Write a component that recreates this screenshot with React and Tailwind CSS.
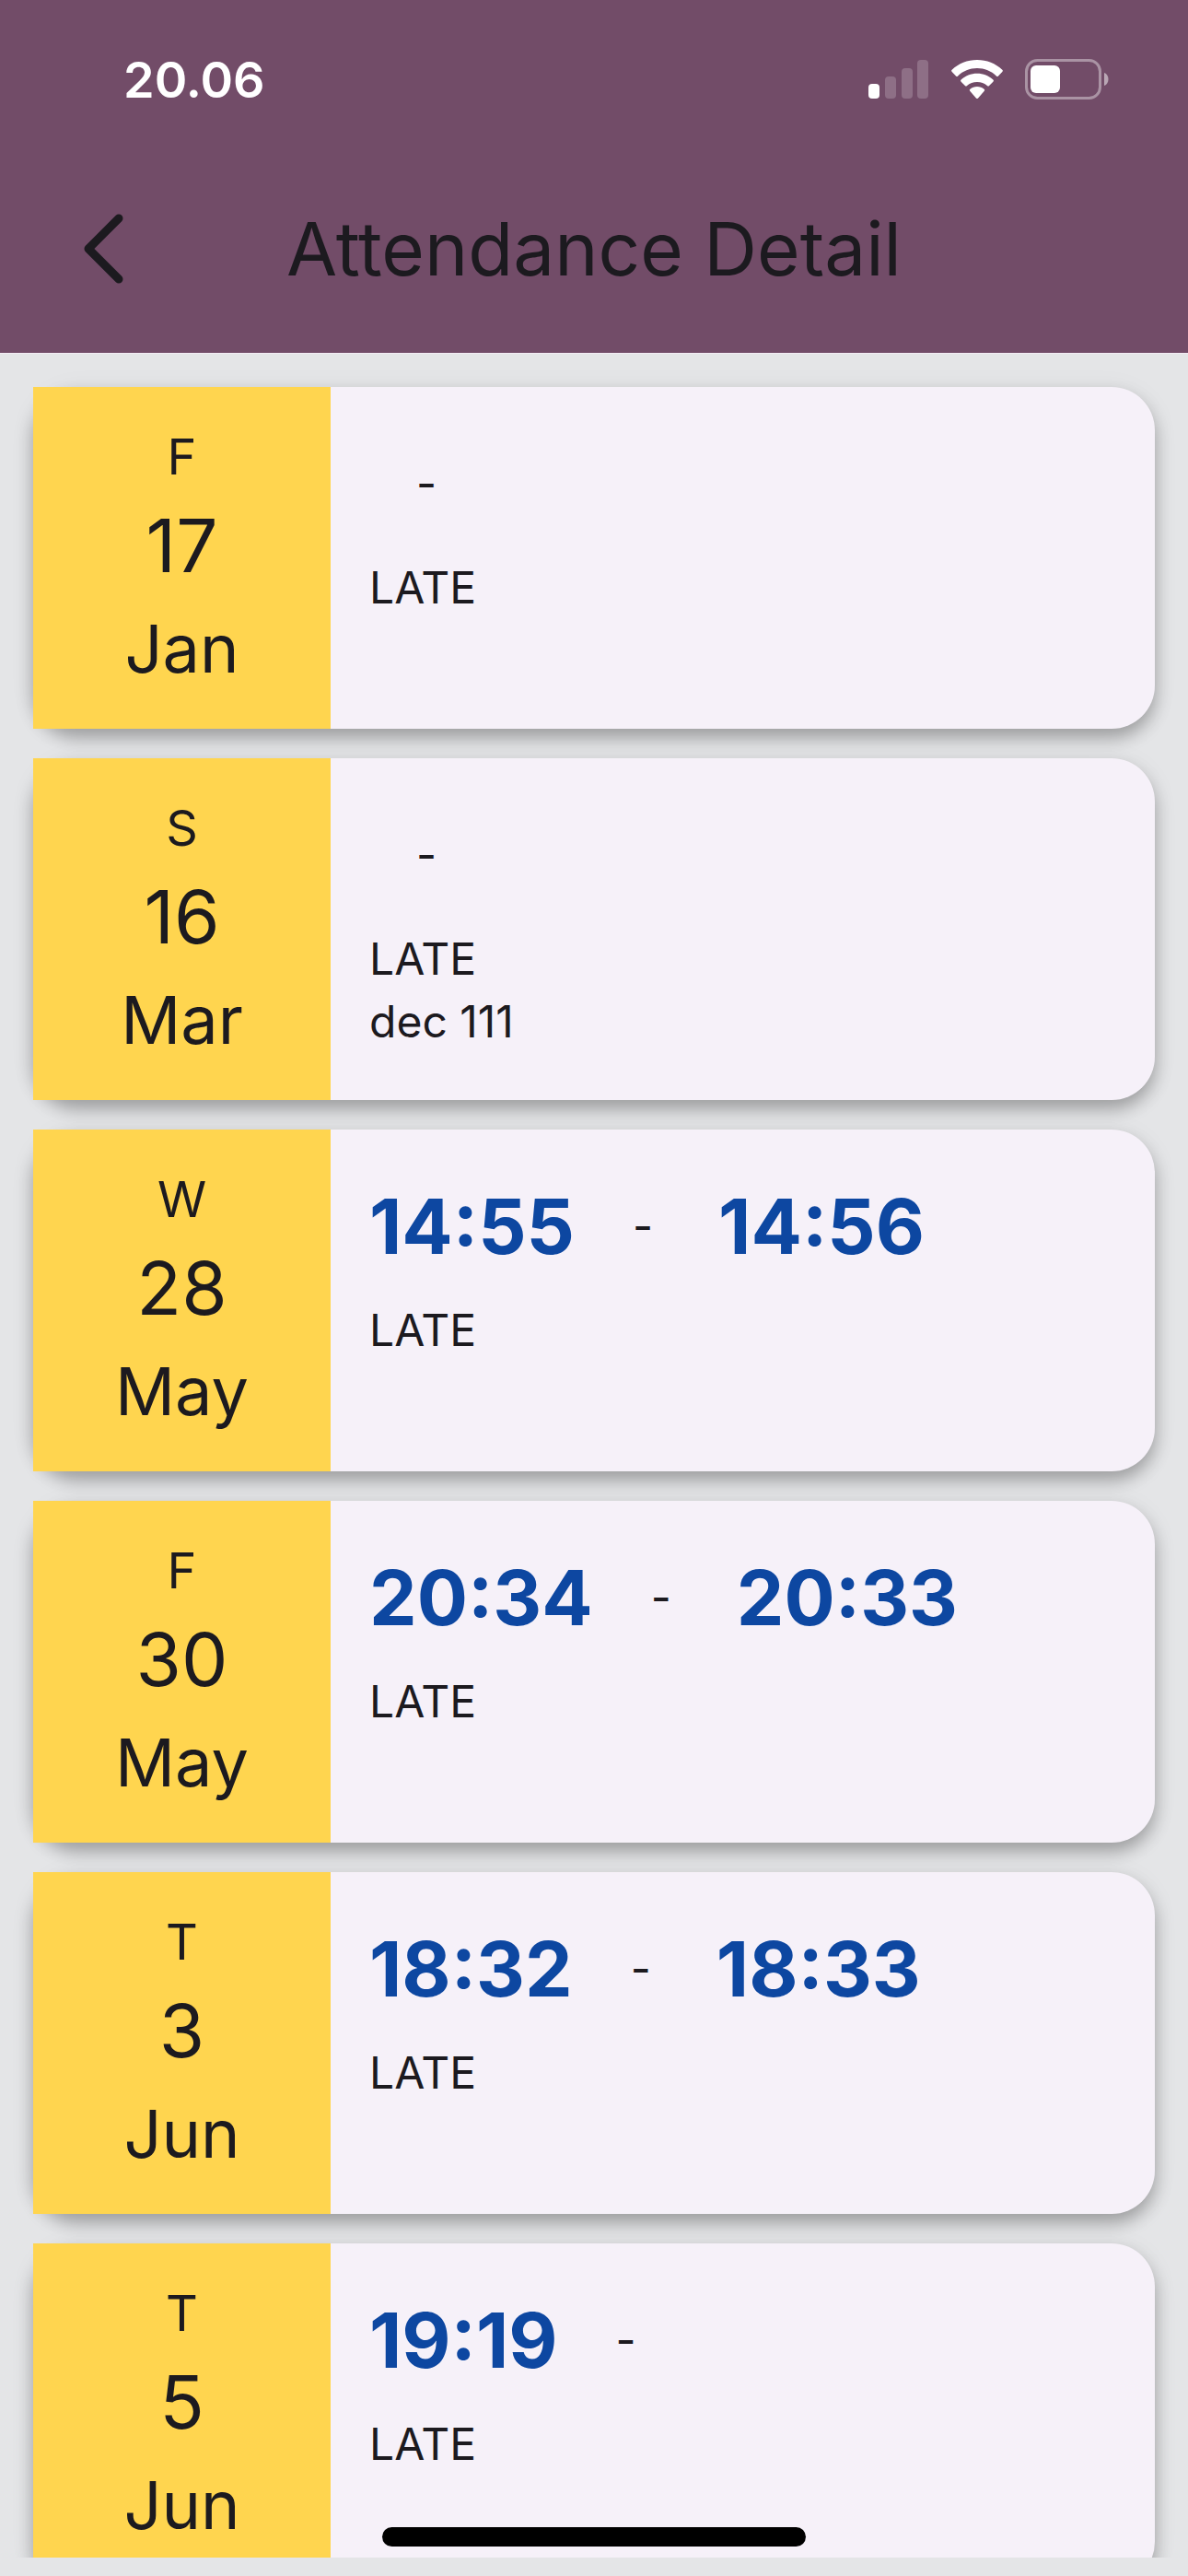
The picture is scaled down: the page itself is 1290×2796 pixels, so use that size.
const records = [
  { id: 1, day: 'F', date: '17', month: 'Jan', status: 'LATE' },
  { id: 2, day: 'S', date: '16', month: 'Mar', status: 'LATE', note: 'dec 111' },
  { id: 3, day: 'W', date: '28', month: 'May', checkIn: '14:55', checkOut: '14:56', status: 'LATE' },
  { id: 4, day: 'F', date: '30', month: 'May', checkIn: '20:34', checkOut: '20:33', status: 'LATE' },
  { id: 5, day: 'T', date: '3', month: 'Jun', checkIn: '18:32', checkOut: '18:33', status: 'LATE' },
  { id: 6, day: 'T', date: '5', month: 'Jun', checkIn: '19:19', status: 'LATE' },
];

function SignalIcon() {
  return (
    <svg className="w-[66px] h-[42px]" viewBox="0 0 66 42" fill="white">
      <rect x="0" y="26" width="12" height="16" rx="4" />
      <rect x="18" y="18" width="12" height="24" rx="4" opacity="0.2" />
      <rect x="36" y="9" width="12" height="33" rx="4" opacity="0.2" />
      <rect x="53" y="0" width="12" height="42" rx="4" opacity="0.2" />
    </svg>
  );
}

function WifiIcon() {
  return (
    <svg className="w-14 h-[42px]" viewBox="0 0 56 42" fill="white">
      <path d="M28 0C17.500 0 7.900 4 0.700 10.700a1.500 1.500 0 0 0 0 2.200L5 17.400a1.500 1.500 0 0 0 2.100 0C12.600 12.200 20 9.100 28 9.100s15.400 3.100 20.900 8.300a1.500 1.500 0 0 0 2.100 0l4.300-4.500a1.500 1.500 0 0 0 0-2.200C48.100 4 38.500 0 28 0z" />
      <path d="M28 14.800c-6.700 0-12.800 2.500-17.400 6.700a1.500 1.500 0 0 0 0 2.200l4.300 4.300a1.500 1.500 0 0 0 2.100 0C19.900 25.400 23.800 23.900 28 23.900s8.100 1.500 11 4.100a1.500 1.500 0 0 0 2.100 0l4.300-4.300a1.500 1.500 0 0 0 0-2.200C40.800 17.300 34.700 14.800 28 14.800z" />
      <path d="M28 29c-2.900 0-5.500 1-7.600 2.700a1.500 1.500 0 0 0 0 2.200l6.500 7.600a1.500 1.500 0 0 0 2.200 0l6.500-7.600a1.500 1.500 0 0 0 0-2.200C33.500 30 30.900 29 28 29z" />
    </svg>
  );
}

function BatteryIcon() {
  return (
    <svg className="w-[91px] h-11" viewBox="0 0 91 44" fill="none">
      <rect x="1.500" y="1.500" width="80" height="41" rx="12" stroke="white" strokeOpacity="0.4" strokeWidth="3" />
      <rect x="6" y="7" width="32" height="30" rx="6" fill="white" />
      <path d="M86 15c3 1 4.500 4 4.500 7s-1.500 6-4.500 7z" fill="white" fillOpacity="0.5" />
    </svg>
  );
}

function AttendanceCard({ record }) {
  return (
    <li className="flex h-[371px] shrink-0 rounded-[47px] bg-[#f6f1f9] shadow-[0_10px_18px_rgba(0,0,0,0.28),0_4px_30px_rgba(0,0,0,0.06)]">
      <div className="flex w-[323px] shrink-0 flex-col items-center bg-[#ffd54f] pt-10">
        <span className="text-[54px] leading-[72px]">{record.day}</span>
        <span className="text-[80px] leading-[120px]">{record.date}</span>
        <span className="text-[72px] leading-[104px]">{record.month}</span>
      </div>
      <div className="flex min-w-0 flex-1 flex-col pl-[42px] pt-[50px]">
        <div className="flex h-[110px] items-center">
          {record.checkIn && (
            <span className="pr-3 text-[82px] font-bold text-[#0d47a1]">{record.checkIn}</span>
          )}
          <span className="px-[51px] text-[48px]">-</span>
          {record.checkOut && (
            <span className="pl-5 text-[82px] font-bold text-[#0d47a1]">{record.checkOut}</span>
          )}
        </div>
        <span className="mt-6 text-[48px] leading-[68px]">{record.status}</span>
        {record.note && <span className="text-[48px] leading-[68px]">{record.note}</span>}
      </div>
    </li>
  );
}

export default function App() {
  return (
    <div className="relative flex h-screen flex-col overflow-hidden bg-[#e4e5e7] pb-5 font-['Inter',sans-serif] text-[#1c1a1f]">
      <header className="h-[384px] shrink-0 border-b border-[#f3edf4] bg-[#724c68]">
        <div className="flex h-[172px] items-center justify-between pl-[134px] pr-[86px] text-white">
          <span className="text-[54px] font-semibold">20.06</span>
          <div className="flex items-center gap-6">
            <SignalIcon />
            <WifiIcon />
            <BatteryIcon />
          </div>
        </div>
        <div className="grid h-[196px] grid-cols-[220px_1fr_220px] items-center">
          <button type="button" aria-label="Back" className="flex h-32 items-center pl-[88px]">
            <svg className="h-20 w-12" viewBox="0 0 48 80" fill="none" stroke="currentColor" strokeWidth="9" strokeLinecap="round" strokeLinejoin="round">
              <path d="M41 7 8 40l33 33" />
            </svg>
          </button>
          <h1 className="whitespace-nowrap text-center text-[80px]">Attendance Detail</h1>
        </div>
      </header>

      <main className="min-h-0 flex-1 overflow-hidden">
        <ul className="flex flex-col gap-8 px-9 pt-9">
          {records.map((record) => (
            <AttendanceCard key={record.id} record={record} />
          ))}
        </ul>
      </main>

      {/* home indicator */}
      <div className="absolute inset-x-0 bottom-8 mx-auto h-[21px] w-[460px] rounded-full bg-black" />
    </div>
  );
}
